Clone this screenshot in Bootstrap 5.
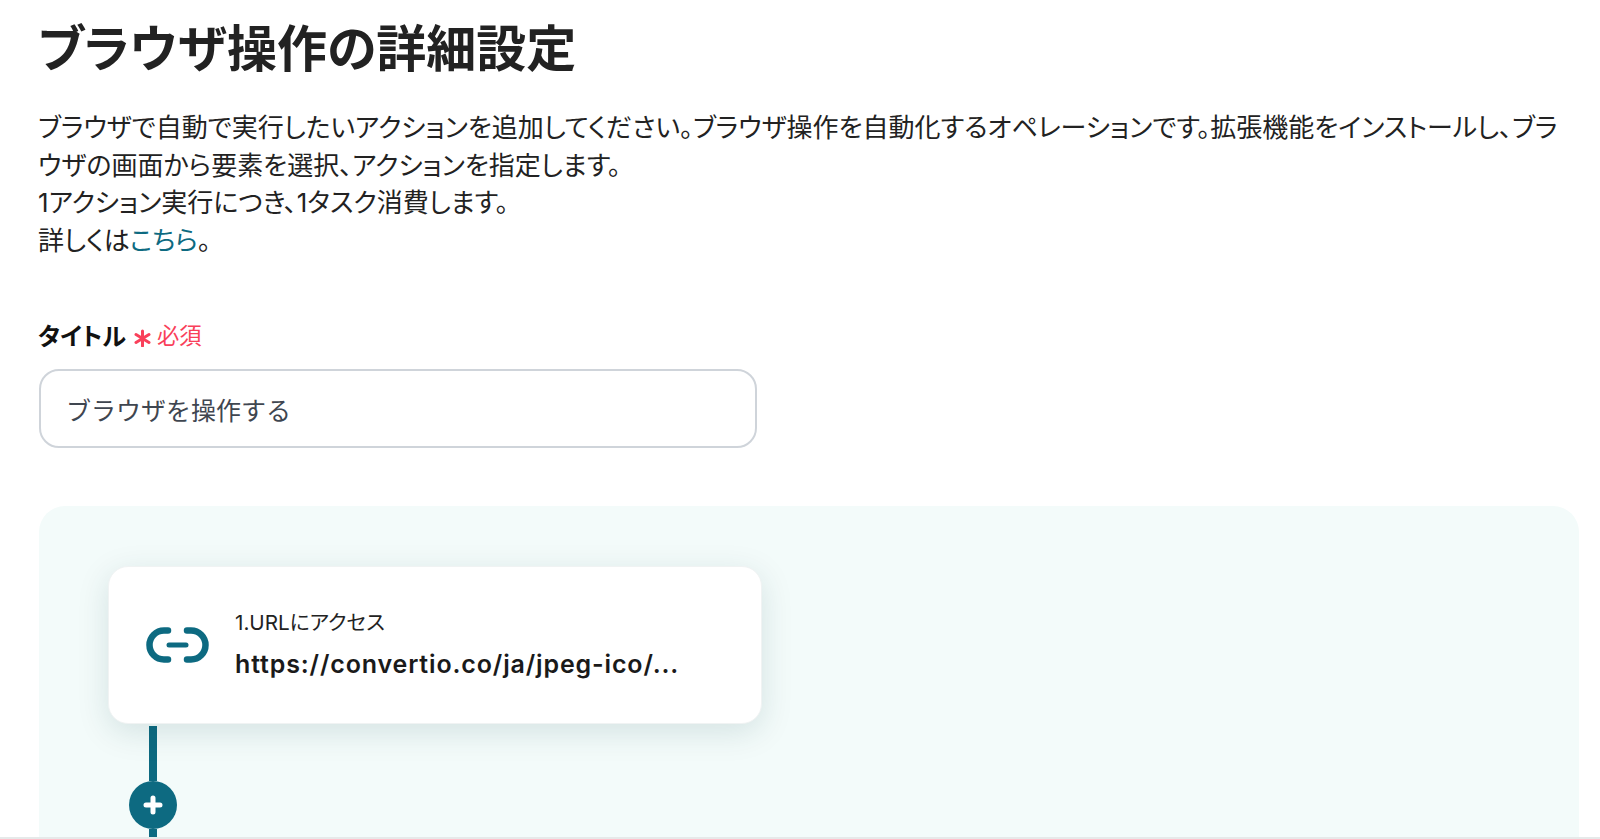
<!DOCTYPE html>
<html lang="ja">
<head>
  <meta charset="UTF-8">
  <title>ブラウザ操作の詳細設定</title>
  <link href="https://cdn.jsdelivr.net/npm/bootstrap@5.3.0/dist/css/bootstrap.min.css" rel="stylesheet">
  <style>
    html, body {
      height: 839px;
      overflow: hidden;
      background: #fff;
    }
    body {
      font-family: "Inter", "Noto Sans CJK JP", sans-serif;
      font-feature-settings: "palt";
      color: #222;
    }
    .page-wrap {
      height: 839px;
      overflow: hidden;
      padding: 18px 21px 0 39px;
      border-bottom: 2px solid #e6e9e9;
    }
    .page-title {
      font-size: 50px;
      font-weight: 700;
      line-height: 62px;
      margin: 0 0 29px -1px;
      color: #222;
    }
    .page-desc {
      font-size: 26px;
      line-height: 37.6px;
      margin: 0 12px 60px -1px;
      color: #222;
    }
    .page-desc a {
      color: #0d6a81;
      text-decoration: none;
    }
    .title-label {
      font-size: 24.3px;
      font-weight: 700;
      line-height: 34px;
      margin: 0 0 16px -1px;
      color: #111;
      display: flex;
      align-items: center;
      gap: 8px;
    }
    .req-mark {
      font-size: 22.3px;
      font-weight: 400;
      color: #f9405a;
      display: flex;
      align-items: center;
      gap: 6px;
    }
    .req-mark svg {
      margin-top: 3px;
    }
    .title-input.form-control {
      width: 718px;
      height: 79px;
      border: 2px solid #cfd4da;
      border-radius: 20px;
      font-size: 25px;
      padding: 0 25px;
      color: #3f4650;
      box-shadow: none;
    }
    .flow-panel {
      background: #f3fbfa;
      border-radius: 26px 26px 0 0;
      margin-top: 58px;
      height: 340px;
      padding: 60px 0 0 69px;
    }
    .step-card.card {
      width: 654px;
      height: 158px;
      border: 1px solid #f0f3f3;
      border-radius: 20px;
      box-shadow: 0 8px 32px rgba(10, 60, 70, .13);
      padding: 0 0 0 37px;
      margin-bottom: 2px;
    }
    .step-label {
      font-size: 20.7px;
      line-height: 26px;
      color: #222;
      margin-bottom: 12px;
    }
    .step-url {
      font-size: 25px;
      font-weight: 600;
      letter-spacing: .85px;
      line-height: 32px;
      color: #1a1a1a;
    }
    .step-text {
      margin-left: 25px;
    }
    .flow-link {
      width: 48px;
      margin-left: 21px;
    }
    .link-line {
      width: 8px;
      background: #0d6a81;
    }
    .link-top { height: 55px; }
    .link-bottom { height: 12px; }
    .add-btn {
      width: 48px;
      height: 48px;
      background: #0d6a81;
      border-radius: 50%;
    }
  </style>
</head>
<body>
  <div class="page-wrap">
    <h1 class="page-title">ブラウザ操作の詳細設定</h1>
    <p class="page-desc">
      ブラウザで自動で実行したいアクションを追加してください。ブラウザ操作を自動化するオペレーションです。拡張機能をインストールし、ブラウザの画面から要素を選択、アクションを指定します。<br>
      1アクション実行につき、1タスク消費します。<br>
      詳しくは<a href="#">こちら</a>。
    </p>

    <div class="title-label">
      <span>タイトル</span>
      <span class="req-mark">
        <svg width="17" height="18" viewBox="0 0 17 18" fill="none" stroke="#f9405a" stroke-width="3" stroke-linecap="round"><path d="M8.5 2v15M2 5.5l13 8M15 5.5l-13 8"/></svg>
        必須
      </span>
    </div>
    <input type="text" class="form-control title-input" value="ブラウザを操作する">

    <div class="flow-panel">
      <div class="card step-card d-flex flex-row align-items-center">
        <svg width="64" height="36" viewBox="0 0 64 36" fill="none" stroke="#0d6a81" stroke-width="6.5" stroke-linecap="round">
          <path d="M22 3.5H18a14.5 14.5 0 0 0 0 29H22"/>
          <path d="M41 3.5H45a14.5 14.5 0 0 1 0 29H41"/>
          <path d="M23 18H40" stroke-width="5"/>
        </svg>
        <div class="step-text">
          <div class="step-label">1.URLにアクセス</div>
          <div class="step-url">https://convertio.co/ja/jpeg-ico/...</div>
        </div>
      </div>
      <div class="flow-link d-flex flex-column align-items-center">
        <div class="link-line link-top"></div>
        <div class="add-btn d-flex align-items-center justify-content-center flex-shrink-0">
          <svg width="20" height="20" viewBox="0 0 20 20" fill="none" stroke="#fff" stroke-width="5" stroke-linecap="round"><path d="M10 3v14M3 10h14"/></svg>
        </div>
        <div class="link-line link-bottom"></div>
      </div>
    </div>
  </div>
  <script src="https://cdn.jsdelivr.net/npm/bootstrap@5.3.0/dist/js/bootstrap.bundle.min.js"></script>
</body>
</html>
